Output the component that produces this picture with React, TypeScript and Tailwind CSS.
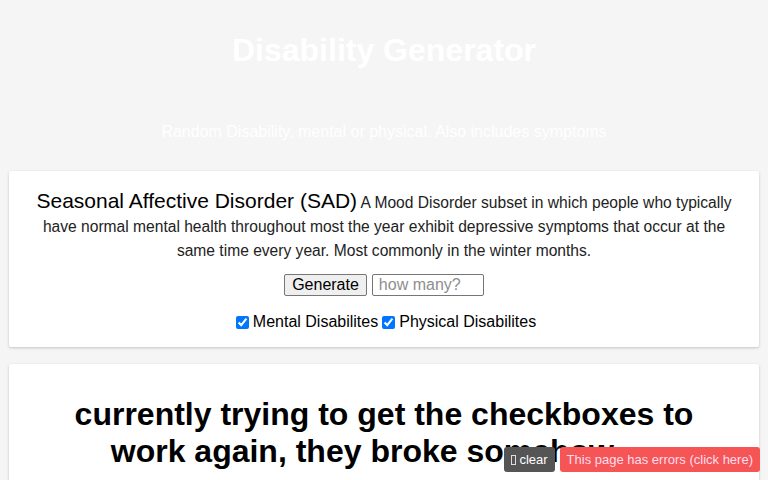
import React from 'react';

const App: React.FC = () => {
  return (
    <div className="min-h-[480px] bg-[#f5f5f5] font-['Liberation_Sans',Arial,sans-serif] text-black overflow-hidden h-[480px] relative">
      <header className="text-center text-white">
        <h1 className="pt-[32px] text-[32px] leading-[37px] font-bold">Disability Generator</h1>
        <p className="mt-[54px] text-[16px] leading-[18px]">
          Random Disability, mental or physical. Also includes symptoms
        </p>
      </header>

      <section className="mx-[9px] mt-[30px] bg-white rounded-[2px] shadow-[0_1px_3px_rgba(0,0,0,0.2)] px-[20px] pt-[18px] pb-[15px] text-center">
        <p className="text-[15.6px] leading-[24px] text-[#222]">
          <span className="text-[21px] text-black">Seasonal Affective Disorder (SAD)</span>{' '}
          A Mood Disorder subset in which people who typically have normal mental health throughout most the year
          exhibit depressive symptoms that occur at the same time every year. Most commonly in the winter months.
        </p>
        <div className="mt-[11px] flex items-center justify-center gap-[5px]">
          <button
            type="button"
            className="h-[22px] px-[7px] bg-[#efefef] border border-[#767676] rounded-[2px] text-[16px] leading-[18px] text-black"
          >
            Generate
          </button>
          <input
            type="text"
            placeholder="how many?"
            className="w-[112px] h-[22px] px-[6px] border border-[#767676] rounded-[2px] text-[16px] leading-[18px] placeholder-[#8e8e8e] outline-none"
          />
        </div>
        <div className="mt-[16px] flex items-center justify-center text-[16px] leading-[20px]">
          <label className="flex items-center">
            <input type="checkbox" defaultChecked className="w-[13px] h-[13px] ml-[4px] mr-[4px] accent-[#0075ff]" />
            Mental Disabilites
          </label>
          <label className="flex items-center">
            <input type="checkbox" defaultChecked className="w-[13px] h-[13px] ml-[4px] mr-[4px] accent-[#0075ff]" />
            Physical Disabilites
          </label>
        </div>
      </section>

      <section className="mx-[9px] mt-[17px] bg-white rounded-[2px] shadow-[0_1px_3px_rgba(0,0,0,0.2)] px-[40px] pt-[32px] pb-[30px] text-center">
        <h2 className="text-[32px] leading-[37px] font-bold">
          currently trying to get the checkboxes to work again, they broke somehow.....
        </h2>
      </section>

      <div className="absolute right-[8px] bottom-[8px] flex gap-[5px] text-[13px] leading-[15px]">
        <button type="button" className="h-[25px] px-[7px] bg-[#555] text-white rounded-[3px] flex items-center gap-[3px]">
          <span className="inline-block w-[5px] h-[10px] border border-white/80" />
          clear
        </button>
        <button type="button" className="h-[25px] px-[7px] bg-[#f55555] text-[#fde] rounded-[3px]">
          This page has errors (click here)
        </button>
      </div>
    </div>
  );
};

export default App;
